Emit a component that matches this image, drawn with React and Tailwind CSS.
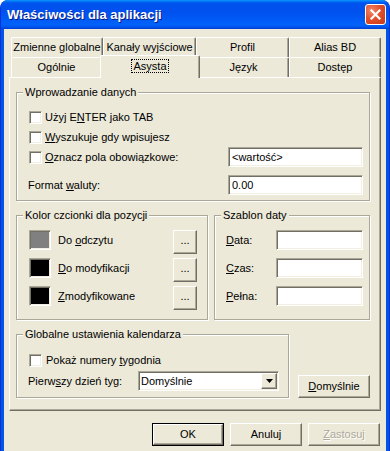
import React from "react";

const font = { fontFamily: '"Liberation Sans", Arial, sans-serif' };

const sunken =
  "border border-t-[#aca899] border-l-[#aca899] border-r-white border-b-white shadow-[inset_1px_1px_0_#716f64,inset_-1px_-1px_0_#f1efe2]";
const raised =
  "border border-t-white border-l-white border-r-[#716f64] border-b-[#716f64] shadow-[inset_-1px_-1px_0_#aca899] bg-[#ece9d8]";

function U({ children }) {
  return <span className="underline decoration-1 underline-offset-[1px]">{children}</span>;
}

function Check() {
  return <span className={`block w-[13px] h-[13px] shrink-0 bg-white ${sunken}`} />;
}

function Field({ value, className = "" }) {
  return (
    <div className={`h-[20px] bg-white ${sunken} flex items-center px-[3px] ${className}`}>
      {value}
    </div>
  );
}

function Group({ title, className = "", children }) {
  return (
    <fieldset
      className={`border border-[#aca899] shadow-[inset_1px_1px_0_#fff,1px_1px_0_#fff] ${className}`}
    >
      <legend className="ml-[6px] px-[2px] leading-[13px] bg-[#ece9d8]">{title}</legend>
      {children}
    </fieldset>
  );
}

function Tab({ label, w }) {
  return (
    <div
      className={`h-[20px] ${w} shrink-0 flex items-center justify-center border-t border-l border-r border-t-white border-l-white border-r-[#716f64] shadow-[inset_-1px_0_0_#aca899] rounded-t-[2px]`}
    >
      {label}
    </div>
  );
}

function Button({ children, className = "", disabled }) {
  return (
    <div
      className={`h-[23px] w-[72px] flex items-center justify-center ${raised} ${
        disabled ? "text-[#aca899] [text-shadow:1px_1px_0_#fff]" : ""
      } ${className}`}
    >
      {children}
    </div>
  );
}

function ColorRow({ color, label }) {
  return (
    <div className="flex items-start h-[24px] pl-[12px] pr-[10px]">
      <span className={`block w-[22px] h-[20px] shrink-0 ${sunken}`} style={{ background: color }} />
      <span className="ml-[7px] h-[20px] flex items-center">
        <span>{label}</span>
      </span>
      <Button className="ml-auto !w-[24px] !h-[24px] pb-[4px]">...</Button>
    </div>
  );
}

function DateRow({ label }) {
  return (
    <div className="flex items-center h-[20px] pl-[11px] pr-[6px]">
      <span>{label}</span>
      <Field className="ml-auto w-[87px]" />
    </div>
  );
}

export default function App() {
  return (
    <div style={font} className="w-[390px] h-[451px] overflow-hidden bg-white text-[11px] text-black">
      <div className="h-full flex flex-col rounded-t-[8px] bg-[#0055e5] border-l border-r border-[#0831d9]">
        {/* title bar */}
        <div className="h-[29px] shrink-0 flex items-center rounded-t-[7px] bg-[linear-gradient(to_bottom,#0997ff_0%,#0053ee_10%,#0050ee_40%,#0062fa_85%,#0058ee_92%,#003dd7_100%)]">
          <span className="ml-[6px] text-[13px] font-bold text-white [text-shadow:1px_1px_0_#0a1883]">
            Właściwości dla aplikacji
          </span>
          <div className="ml-auto mr-[3px] w-[21px] h-[21px] rounded-[3px] border border-white bg-[radial-gradient(circle_at_30%_30%,#f08a6c_0%,#e2502b_45%,#c8391a_100%)] flex items-center justify-center">
            <svg width="11" height="11" viewBox="0 0 11 11">
              <path d="M1.5 1.5 L9.5 9.5 M9.5 1.5 L1.5 9.5" stroke="#fff" strokeWidth="2.2" strokeLinecap="square" />
            </svg>
          </div>
        </div>

        {/* client area */}
        <div className="flex-1 mx-[3px] bg-[#ece9d8] flex flex-col">
          {/* tabs */}
          <div className="mt-[8px] ml-[7px] w-[370px] flex flex-col">
            <div className="flex">
              <Tab label="Zmienne globalne" w="w-[92px]" />
              <Tab label="Kanały wyjściowe" w="w-[93px]" />
              <Tab label="Profil" w="w-[93px]" />
              <Tab label="Alias BD" w="w-[92px]" />
            </div>
            <div className="flex items-start h-[20px]">
              <Tab label="Ogólnie" w="w-[91px]" />
              <div className="relative z-10 -mx-[2px] -mt-[2px] w-[100px] h-[23px] shrink-0 flex items-start justify-center pt-[3px] bg-[#ece9d8] border-t border-l border-r border-t-white border-l-white border-r-[#716f64] shadow-[inset_-1px_0_0_#aca899] rounded-t-[2px]">
                <span className="border border-dotted border-black px-[1px] leading-[12px]">Asysta</span>
              </div>
              <Tab label="Język" w="w-[91px]" />
              <Tab label="Dostęp" w="w-[92px]" />
            </div>
          </div>

          {/* panel */}
          <div className="ml-[5px] w-[372px] h-[334px] shrink-0 flex flex-col px-[6px] border border-t-white border-l-white border-r-[#716f64] border-b-[#716f64] shadow-[inset_-1px_-1px_0_#aca899]">
            <Group title="Wprowadzanie danych" className="mt-[8px] w-[354px] h-[115px]">
              <div className="mt-[8px] flex flex-col">
                <div className="flex items-center h-[20px] pl-[12px]">
                  <Check />
                  <span className="ml-[3px]">
                    Użyj E<U>N</U>TER jako TAB
                  </span>
                </div>
                <div className="flex items-center h-[20px] pl-[12px]">
                  <Check />
                  <span className="ml-[3px]">
                    <U>W</U>yszukuje gdy wpisujesz
                  </span>
                </div>
                <div className="flex items-center h-[20px] pl-[12px] pr-[6px]">
                  <Check />
                  <span className="ml-[3px]">
                    <U>O</U>znacz pola obowiązkowe:
                  </span>
                  <Field value="<wartość>" className="ml-auto w-[135px]" />
                </div>
                <div className="mt-[8px] flex items-center h-[20px] pl-[11px] pr-[6px]">
                  <span>
                    Format <U>w</U>aluty:
                  </span>
                  <Field value="0.00" className="ml-auto w-[135px]" />
                </div>
              </div>
            </Group>

            <div className="mt-[8px] flex gap-[6px]">
              <Group title="Kolor czcionki dla pozycji" className="w-[192px] h-[111px]">
                <div className="mt-[8px] flex flex-col gap-[4px]">
                  <ColorRow color="#808080" label={<>Do <U>o</U>dczytu</>} />
                  <ColorRow color="#000000" label={<><U>D</U>o modyfikacji</>} />
                  <ColorRow color="#000000" label={<><U>Z</U>modyfikowane</>} />
                </div>
              </Group>
              <Group title="Szablon daty" className="w-[156px] h-[111px]">
                <div className="mt-[8px] flex flex-col gap-[8px]">
                  <DateRow label={<><U>D</U>ata:</>} />
                  <DateRow label={<><U>C</U>zas:</>} />
                  <DateRow label={<><U>P</U>ełna:</>} />
                </div>
              </Group>
            </div>

            <div className="mt-[8px] flex items-end">
              <Group title="Globalne ustawienia kalendarza" className="w-[273px] h-[70px]">
                <div className="mt-[9px] flex items-center h-[20px] pl-[12px]">
                  <Check />
                  <span className="ml-[4px]">
                    Pokaż numery <U>t</U>ygodnia
                  </span>
                </div>
                <div className="mt-[1px] flex items-center h-[20px] pl-[11px] pr-[9px]">
                  <span>
                    Pierw<U>s</U>zy dzień tyg:
                  </span>
                  <div className={`ml-auto w-[141px] h-[20px] bg-white ${sunken} flex items-center`}>
                    <span className="flex-1 pl-[2px]">Domyślnie</span>
                    <div className={`w-[16px] h-[16px] mr-px flex items-center justify-center ${raised}`}>
                      <svg width="7" height="4" viewBox="0 0 7 4">
                        <path d="M0 0 H7 L3.5 4 Z" fill="#000" />
                      </svg>
                    </div>
                  </div>
                </div>
              </Group>
              <Button className="ml-[9px]">
                <span>
                  <U>D</U>omyślnie
                </span>
              </Button>
            </div>
          </div>

          {/* dialog buttons */}
          <div className="mt-[12px] flex justify-end gap-[6px] pr-[6px]">
            <div className="border border-black">
              <Button className="!w-[70px] !h-[21px]">OK</Button>
            </div>
            <Button>Anuluj</Button>
            <Button disabled>
              <span>
                <U>Z</U>astosuj
              </span>
            </Button>
          </div>
        </div>
      </div>
    </div>
  );
}
